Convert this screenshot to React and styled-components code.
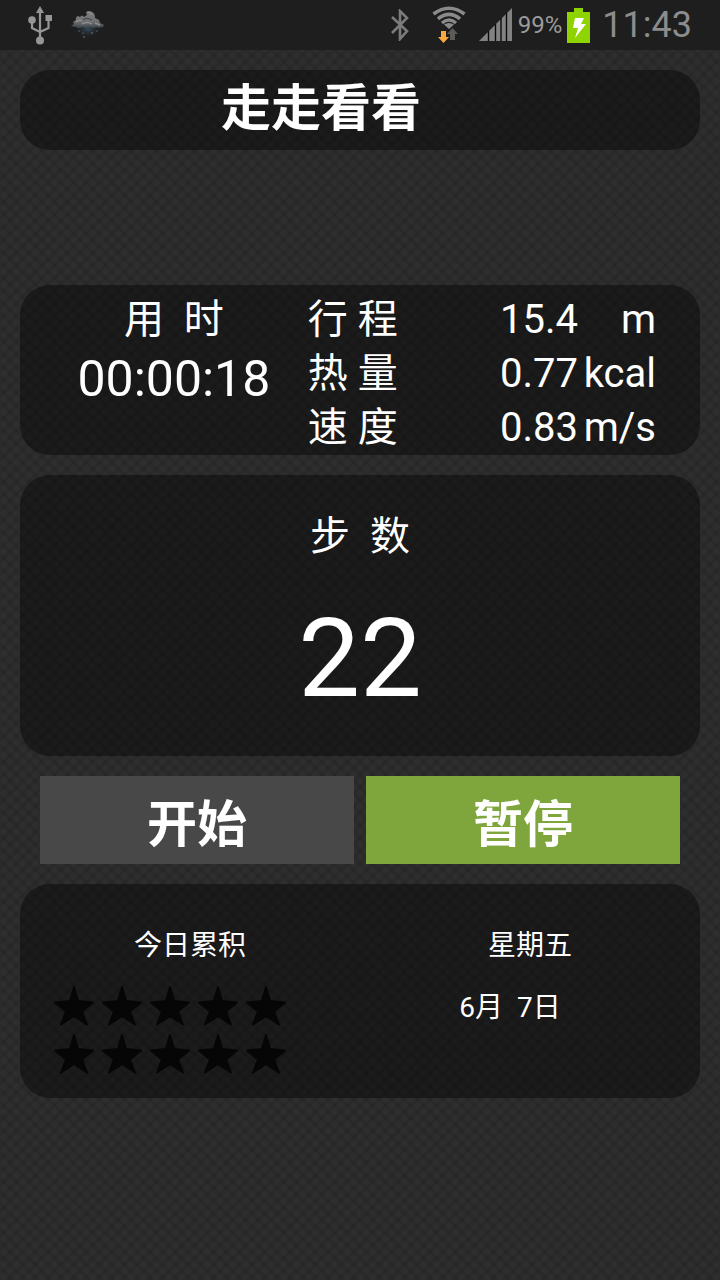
import React from "react";
import styled, { createGlobalStyle } from "styled-components";

const details = [
  { label: "行 程", value: "15.4", unit: "m" },
  { label: "热 量", value: "0.77", unit: "kcal" },
  { label: "速 度", value: "0.83", unit: "m/s" },
];

const stars = Array.from({ length: 10 });

const UsbIcon = () => (
  <svg width="24" height="40" viewBox="0 0 24 40" fill="none">
    <g fill="#969696">
      <path d="M12 1 L16 8 H8 Z" />
      <circle cx="12" cy="35.500" r="4" />
      <circle cx="4" cy="15" r="3.800" />
      <rect x="17.500" y="10" width="6.500" height="6" />
    </g>
    <path
      d="M12 7 V34 M4 16 V23 L12 27 M20.500 15 V23 L12 27"
      stroke="#969696"
      strokeWidth="2.200"
    />
  </svg>
);

const WeatherIcon = () => (
  <svg width="36" height="32" viewBox="0 0 36 32">
    <defs>
      <linearGradient id="cloud" x1="0" y1="0" x2="0" y2="1">
        <stop offset="0" stopColor="#7c7c7c" />
        <stop offset="0.6" stopColor="#707274" />
        <stop offset="1" stopColor="#3c444b" />
      </linearGradient>
      <radialGradient id="rain">
        <stop offset="0" stopColor="#33495b" />
        <stop offset="1" stopColor="#1e1e1e" stopOpacity="0" />
      </radialGradient>
    </defs>
    <ellipse cx="18" cy="20" rx="14" ry="10" fill="url(#rain)" />
    <path
      d="M1 17 L4 15 L3 13 L6 11 Q5 8 8 7 L10 8 Q12 5 14 8 L17 6 L16 3 Q19 1 22 3 Q25 4 25 9 L29 11 L30 14 L34 16 L33 18 Q29 19 26 18 Q24 20 20 18 Q16 20 13 18 Q8 20 6 18 Z"
      fill="url(#cloud)"
    />
    <path
      d="M6 13 Q9 10 12 12 M18 4 Q21 3 22 6 M12 15 Q17 12 22 15 M25 14 L30 16"
      stroke="#8e8e8e"
      strokeWidth="1.500"
      fill="none"
    />
    <path d="M13 11 Q16 8 22 11" stroke="#3d4042" fill="none" />
    <g fill="#8a9aa5">
      <circle cx="9" cy="22" r="0.600" />
      <circle cx="13" cy="24" r="0.600" />
      <circle cx="22" cy="24" r="0.700" />
      <circle cx="27" cy="22" r="0.600" />
      <circle cx="14" cy="28" r="0.700" />
    </g>
  </svg>
);

const BluetoothIcon = () => (
  <svg width="20" height="32" viewBox="0 0 20 32" fill="none">
    <path
      d="M2 8 L17 22 L10 30 V2 L17 9 L2 24"
      stroke="#7b7b7b"
      strokeWidth="2.600"
    />
  </svg>
);

const WifiIcon = () => (
  <svg width="34" height="38" viewBox="0 0 34 38" fill="none">
    <g stroke="#8a8a8a" strokeWidth="3.600">
      <path d="M1.500 8 Q17 -3.500 32.500 8" />
      <path d="M6 12.800 Q17 3.800 28 12.800" />
      <path d="M10 17 Q17 11 24 17" />
    </g>
    <path d="M12 18.500 Q17 15.500 22 18.500 L17 23 Z" fill="#8a8a8a" />
    <path d="M9 25 H14 V31 H17 L11.500 37 L6 31 H9 Z" fill="#f9a73e" />
    <path d="M18 34 V28 H15 L20.500 22 L26 28 H23 V34 Z" fill="#5a5a5a" />
  </svg>
);

const SignalIcon = () => (
  <svg width="34" height="34" viewBox="0 0 34 34">
    <path d="M0 33 L33 0 V33 Z" fill="#828282" />
    <path
      d="M9.500 23 V33 M16.500 16 V33 M22 10 V33 M27.500 5 V33"
      stroke="#0c0c0c"
      strokeWidth="1.400"
    />
  </svg>
);

const BatteryIcon = () => (
  <svg width="23" height="35" viewBox="0 0 23 35">
    <path d="M7 0 H16 V4 H23 V35 H0 V4 H7 Z" fill="#8fd300" />
    <path d="M8 10 H17 L14 16 H19 L8 30 L11 20 H6 Z" fill="#fff" />
  </svg>
);

const StarIcon = () => (
  <svg width="48" height="48" viewBox="0 0 48 48">
    <path
      d="M24 5 L28 19 L43 20.500 L32 29.500 L37 42.500 L24 34 L11 42.500 L16 29.500 L5 20.500 L20 19 Z"
      fill="#060606"
      stroke="#060606"
      strokeWidth="2"
      strokeLinejoin="round"
    />
  </svg>
);

const App = () => {
  return (
    <>
      <GlobalStyle />
      <StatusBar>
        <StatusGroup $gap="18px">
          <UsbIcon />
          <WeatherIcon />
        </StatusGroup>
        <StatusGroup $gap="5px">
          <Connections>
            <BluetoothIcon />
            <WifiIcon />
          </Connections>
          <SignalIcon />
          <Charge>99%</Charge>
          <BatteryIcon />
          <Clock>11:43</Clock>
        </StatusGroup>
      </StatusBar>

      <Screen>
        <TitlePanel>
          <h1>走走看看</h1>
        </TitlePanel>

        <StatsPanel>
          <Timer>
            <Label>用  时</Label>
            <time>00:00:18</time>
          </Timer>
          <Details>
            {details.map((item) => (
              <DetailRow key={item.label}>
                <dt>{item.label}</dt>
                <dd>{item.value}</dd>
                <dd>{item.unit}</dd>
              </DetailRow>
            ))}
          </Details>
        </StatsPanel>

        <StepsPanel>
          <Label>步  数</Label>
          <StepCount>22</StepCount>
        </StepsPanel>

        <Actions>
          <ActionButton type="button">开始</ActionButton>
          <ActionButton type="button" $active>
            暂停
          </ActionButton>
        </Actions>

        <SummaryPanel>
          <div>
            <SummaryText>今日累积</SummaryText>
            <Stars>
              {stars.map((_, idx) => (
                <StarIcon key={idx} />
              ))}
            </Stars>
          </div>
          <div>
            <SummaryText>星期五</SummaryText>
            <DateText>6月  7日</DateText>
          </div>
        </SummaryPanel>
      </Screen>
    </>
  );
};

const GlobalStyle = createGlobalStyle`
  * {
    box-sizing: border-box;
  }

  body {
    margin: 0;
    min-height: 100vh;
    color: #fff;
    font-family: Roboto, "Noto Sans CJK SC", sans-serif;
    background-color: #2e2e2e;
    background-image:
      repeating-linear-gradient(45deg, #0000001c 0, #0000 3px, #0000 6px, #0000001c 9px),
      repeating-linear-gradient(-45deg, #0000001c 0, #0000 3px, #0000 6px, #0000001c 9px);
  }

  h1, p, dl, dt, dd {
    margin: 0;
  }

  svg {
    display: block;
    flex: none;
  }
`;

const StatusBar = styled.header`
  display: flex;
  justify-content: space-between;
  align-items: center;
  height: 50px;
  padding: 0 28px;
  background-color: #1e1e1e;
`;

const StatusGroup = styled.div`
  display: flex;
  align-items: center;
  gap: ${(props) => props.$gap};
`;

const Connections = styled.div`
  display: flex;
  align-items: center;
  gap: 22px;
  margin-right: 8px;
`;

const Charge = styled.span`
  color: #9b9b9b;
  font-size: 24px;
`;

const Clock = styled.time`
  margin-left: 7px;
  color: #8c8c8c;
  font-size: 36px;
`;

const Screen = styled.main`
  display: flex;
  flex-direction: column;
  gap: 20px;
  padding: 20px;
`;

const Panel = styled.section`
  border-radius: 30px;
  background-color: #00000066;
`;

const TitlePanel = styled(Panel)`
  margin-bottom: 115px;
  padding: 0 78px 2px 0;
  text-align: center;

  h1 {
    font-size: 50px;
    line-height: 78px;
  }
`;

const Label = styled.p`
  font-size: 40px;
  line-height: 54px;
  white-space: pre;
`;

const StatsPanel = styled(Panel)`
  display: grid;
  grid-template-columns: 10fr 13fr;
  padding: 8px 44px 0 20px;
`;

const Timer = styled.div`
  text-align: center;

  time {
    display: block;
    font-size: 50px;
    line-height: 64px;
  }
`;

const Details = styled.dl`
  font-size: 40px;
  line-height: 54px;
`;

const DetailRow = styled.div`
  display: grid;
  grid-template-columns: auto 1fr 78px;

  dd {
    text-align: right;
  }
`;

const StepsPanel = styled(Panel)`
  padding: 35px 0 32px;
  text-align: center;
`;

const StepCount = styled.p`
  margin-top: 30px;
  font-size: 110px;
  line-height: 130px;
`;

const Actions = styled.div`
  display: grid;
  grid-template-columns: 1fr 1fr;
  gap: 12px;
  padding: 0 20px;
`;

const ActionButton = styled.button`
  height: 88px;
  border: none;
  color: #fff;
  font-family: inherit;
  font-size: 50px;
  font-weight: bold;
  cursor: pointer;
  background-color: ${(props) => (props.$active ? "#7fa63d" : "#484848")};
`;

const SummaryPanel = styled(Panel)`
  display: grid;
  grid-template-columns: 1fr 1fr;
  padding: 41px 0 20px;
`;

const SummaryText = styled.p`
  font-size: 28px;
  line-height: 42px;
  text-align: center;
  white-space: pre;
`;

const DateText = styled(SummaryText)`
  margin-top: 20px;
  padding-right: 40px;
`;

const Stars = styled.div`
  display: grid;
  grid-template-columns: repeat(5, 48px);
  margin-top: 15px;
  padding-left: 30px;
`;

export default App;
